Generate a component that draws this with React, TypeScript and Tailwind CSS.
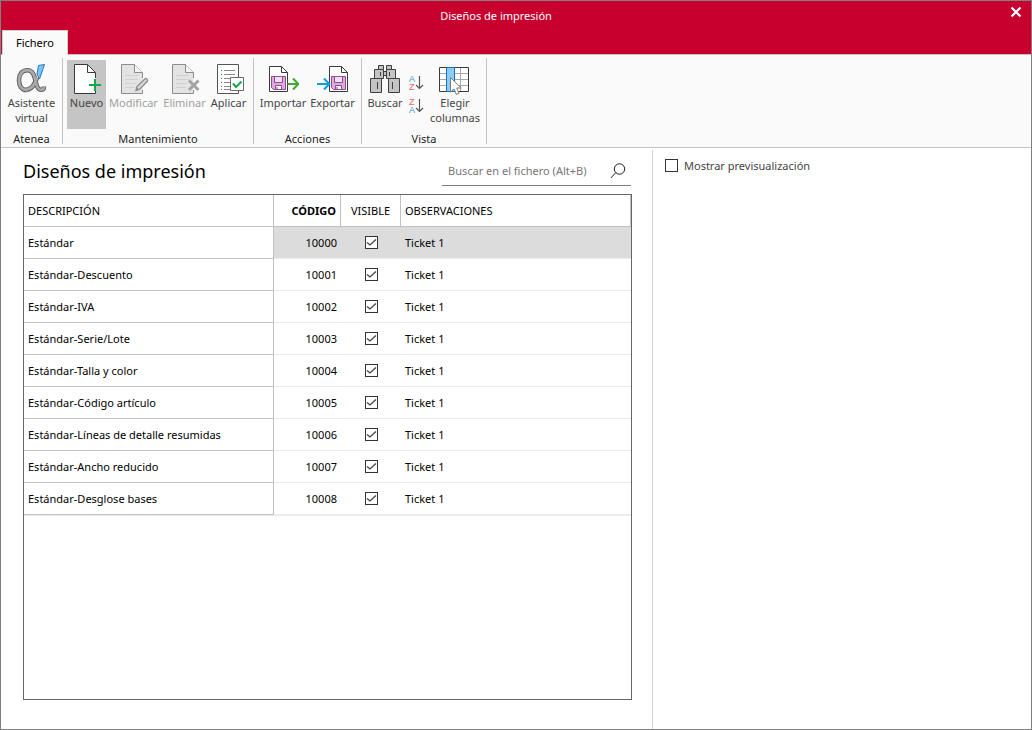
import { useState } from "react";
import type { ReactNode } from "react";

//! Data

const designs = [
  { code: 10000, name: "Estándar", notes: "Ticket 1" },
  { code: 10001, name: "Estándar-Descuento", notes: "Ticket 1" },
  { code: 10002, name: "Estándar-IVA", notes: "Ticket 1" },
  { code: 10003, name: "Estándar-Serie/Lote", notes: "Ticket 1" },
  { code: 10004, name: "Estándar-Talla y color", notes: "Ticket 1" },
  { code: 10005, name: "Estándar-Código artículo", notes: "Ticket 1" },
  { code: 10006, name: "Estándar-Líneas de detalle resumidas", notes: "Ticket 1" },
  { code: 10007, name: "Estándar-Ancho reducido", notes: "Ticket 1" },
  { code: 10008, name: "Estándar-Desglose bases", notes: "Ticket 1" },
];

//! Icons

function Icon({ children }: { children: ReactNode }) {
  return (
    <svg viewBox="0 0 32 32" className="h-8 w-8 shrink-0" fill="none" aria-hidden="true">
      {children}
    </svg>
  );
}

function AlphaIcon() {
  const loop =
    "M21 14.5C19 21 15.5 26.5 10.5 26.5M20 20C21 24 22 26.8 25 26.8C27.2 26.8 28 25.5 28 23.5M20 20C18.5 12.5 17 7.2 11.5 7.2C6 7.2 3 11.5 3 17C3 23 6 27 10.5 27";
  return (
    <Icon>
      <path d={loop} stroke="#5c5c5c" strokeWidth="4.6" />
      <path d={loop} stroke="#a9a9a9" strokeWidth="2.8" />
      <path d="M22.5 2.5L28.5 1.5L23.5 16L21 11Z" fill="#83c3f3" stroke="#1e78c2" />
    </Icon>
  );
}

function NewIcon() {
  return (
    <Icon>
      <path d="M3.5 1.5H16.5L24.5 9.5V30.5H3.5Z" fill="#fff" />
      <path d="M24.5 15V9.5L16.5 1.5H3.5V30.5H24.5V28" stroke="#3a3a3a" />
      <path d="M16.5 1.5V9.5H24.5" stroke="#3a3a3a" />
      <path d="M24 16V28M18 22H30" stroke="#13a84c" strokeWidth="2" />
    </Icon>
  );
}

function DisabledDoc() {
  return (
    <>
      <path d="M3.5 1.5H16.5L24.5 9.5V30.5H3.5Z" fill="#e3e3e3" />
      <path d="M24.5 15V9.5L16.5 1.5H3.5V30.5H24.5V27" stroke="#8c8c8c" />
      <path d="M16.5 1.5V9.5H24.5" fill="#f4f4f4" stroke="#8c8c8c" />
      <path d="M7 12.5H20M7 16.5H20M7 20.5H18M7 24.5H17" stroke="#d0d0d0" />
    </>
  );
}

function EditIcon() {
  return (
    <Icon>
      <DisabledDoc />
      <path
        d="M18 27.5L19 23.5L27 15.8C28.3 14.8 30.4 16.8 29.4 18.3L21.7 26.2Z"
        fill="#d6d6d6"
        stroke="#8c8c8c"
        strokeWidth="1.3"
      />
      <path d="M18 27.5L18.8 24.6L20.9 26.5Z" fill="#8c8c8c" />
    </Icon>
  );
}

function DeleteIcon() {
  return (
    <Icon>
      <DisabledDoc />
      <path d="M20 17.5L29.5 27M29.5 17.5L20 27" stroke="#a3a3a3" strokeWidth="3" />
    </Icon>
  );
}

function ApplyIcon() {
  return (
    <Icon>
      <path d="M4.5 1.5H25.5V30.5H4.5Z" fill="#fff" stroke="#555" />
      <path d="M11 7.5H22M11 11.5H22M11 15.5H18M11 19.5H17M11 23.5H17M11 26.5H22" stroke="#8a8a8a" />
      <path d="M8 7.5H9M8 15.5H9M8 23.5H9" stroke="#13a84c" />
      <path d="M8 11.5H9M8 19.5H9M8 26.5H9" stroke="#d8303a" />
      <path d="M17.5 14.5H30.5V27.5H17.5Z" fill="#fff" stroke="#6b6b6b" />
      <path d="M20 20.5L23 24L28.5 18.5" stroke="#13a84c" strokeWidth="2" />
    </Icon>
  );
}

function DiskDoc() {
  return (
    <>
      <path d="M2.5 3.5H14.5L20.5 9.5V28.5H2.5Z" fill="#fff" stroke="#3a3a3a" />
      <path d="M14.5 3.5V9.5H20.5" stroke="#3a3a3a" />
      <path d="M4.5 13.5H18.5V26.5H6.5L4.5 24.5Z" fill="#d9acd9" stroke="#93499a" />
      <path d="M7.5 13.5H15.5V19.5H7.5Z" fill="#f0e1f0" stroke="#93499a" />
      <path d="M8.5 22.5H14.5V26.5H8.5Z" fill="#fff" stroke="#93499a" />
      <path d="M10 24V26" stroke="#93499a" />
    </>
  );
}

function ImportIcon() {
  return (
    <Icon>
      <DiskDoc />
      <path d="M20.5 21H31M26 15.5L31.3 21L26 26.5" stroke="#43a82b" strokeWidth="2" />
    </Icon>
  );
}

function ExportIcon() {
  return (
    <Icon>
      <g transform="translate(10 0)">
        <DiskDoc />
      </g>
      <path d="M0 21H12M7 15.5L12.3 21L7 26.5" stroke="#0a9de0" strokeWidth="2" />
    </Icon>
  );
}

function BinocularsIcon() {
  return (
    <Icon>
      <g fill="#c4c4c4" stroke="#3f3f3f">
        <path d="M9.5 2.5H14.5V6.5H9.5ZM17.5 2.5H22.5V6.5H17.5Z" />
        <path d="M14.5 8.5H17.5V12.5H14.5Z" />
        <path d="M5.5 6.5H14.5V15.5H5.5ZM17.5 6.5H26.5V15.5H17.5Z" />
        <path d="M1.5 15.5H12.5V29.5H1.5ZM19.5 15.5H30.5V29.5H19.5Z" />
        <path d="M11.5 9V13M20.5 9V13M8.5 19V26M23.5 19V26" />
      </g>
    </Icon>
  );
}

function ColumnsIcon() {
  return (
    <Icon>
      <path d="M0.5 4.5H29.5V28.5H0.5Z" fill="#fff" />
      <path d="M1 10.5H29M1 16.5H29M1 22.5H29M21.5 5V28" stroke="#a8a8a8" />
      <path d="M0.5 4.5H29.5V28.5H0.5Z" stroke="#3a3a3a" />
      <path d="M7.5 4.5H15.5V28.5H7.5Z" fill="#8fccf5" stroke="#1272c0" />
      <path
        d="M11.5 14.5V29L15 26L17.5 31.5L20 30.3L17.7 25H22.2Z"
        fill="#fff"
        stroke="#7d7d7d"
      />
    </Icon>
  );
}

function SortIcon({ top, bottom }: { top: string; bottom: string }) {
  return (
    <svg viewBox="0 0 16 17" className="h-[17px] w-4" aria-hidden="true">
      <g fontFamily="Liberation Sans, sans-serif" fontSize="9">
        <text x="1" y="8" fill={top === "A" ? "#3b9bd9" : "#e8626c"}>
          {top}
        </text>
        <text x="1" y="16" fill={bottom === "A" ? "#3b9bd9" : "#e8626c"}>
          {bottom}
        </text>
      </g>
      <path d="M11.5 2V14.5M8 11L11.5 14.5L15 11" fill="none" stroke="#555" strokeWidth="1.2" />
    </svg>
  );
}

//! Ribbon

function RibbonGroup({ title, children }: { title: string; children: ReactNode }) {
  return (
    <div className="flex flex-col justify-between border-r border-[#c3c3c3] px-1 pt-[2px]">
      <div className="flex">{children}</div>
      <p className="text-center leading-[11px] text-[#1c1c1c]">{title}</p>
    </div>
  );
}

type RibbonButtonProps = {
  icon: ReactNode;
  label: string;
  width: string;
  active?: boolean;
  disabled?: boolean;
};

function RibbonButton({ icon, label, width, active, disabled }: RibbonButtonProps) {
  return (
    <button
      type="button"
      disabled={disabled}
      className={`flex h-[69px] flex-col items-center pt-[3px] ${width} ${
        active ? "bg-[#c5c5c5]" : ""
      } ${disabled ? "text-[#a0a0a0]" : "text-[#444]"}`}
    >
      {icon}
      <span>{label}</span>
    </button>
  );
}

function Checkbox({ checked, onChange, label }: { checked: boolean; onChange: () => void; label: string }) {
  return (
    <span className="relative inline-block h-[13px] w-[13px] align-middle">
      <input
        type="checkbox"
        checked={checked}
        onChange={onChange}
        aria-label={label}
        className="block h-[13px] w-[13px] appearance-none border border-[#333] bg-white"
      />
      {checked && (
        <svg viewBox="0 0 13 13" className="pointer-events-none absolute inset-0" fill="none">
          <path d="M2 6.5L5 9L11 3.5" stroke="#444" strokeWidth="1.3" />
        </svg>
      )}
    </span>
  );
}

function DesignTable() {
  const [hidden, setHidden] = useState<number[]>([]);
  const [selected, setSelected] = useState(10000);

  const toggle = (code: number) =>
    setHidden(hidden.includes(code) ? hidden.filter((c) => c !== code) : [...hidden, code]);

  return (
    <table className="w-full table-fixed border-separate border-spacing-0 border-b border-[#ececec] text-black">
      <thead>
        <tr className="h-8 text-left [&>th]:border-r [&>th]:border-b [&>th]:border-[#c0c0c0] [&>th]:p-0">
          <th className="w-[250px] font-normal">
            <span className="pl-1">DESCRIPCIÓN</span>
          </th>
          <th className="w-[67px] text-right font-bold">
            <span className="pr-1">CÓDIGO</span>
          </th>
          <th className="w-[60px] text-center font-normal">VISIBLE</th>
          <th className="font-normal">
            <span className="pl-1">OBSERVACIONES</span>
          </th>
        </tr>
      </thead>
      <tbody>
        {designs.map((design) => (
          <tr
            key={design.code}
            onClick={() => setSelected(design.code)}
            className={`h-8 [&>td]:border-b [&>td]:border-[#ececec] [&>td]:p-0 ${
              selected === design.code ? "bg-[#dcdcdc]" : ""
            }`}
          >
            <td className="border-r border-r-[#c0c0c0]! border-b-[#c0c0c0]! bg-white">
              <span className="pl-1">{design.name}</span>
            </td>
            <td className="text-right">
              <span className="pr-1">{design.code}</span>
            </td>
            <td className="text-center leading-none">
              <Checkbox
                checked={!hidden.includes(design.code)}
                onChange={() => toggle(design.code)}
                label={`Visible ${design.code}`}
              />
            </td>
            <td>
              <span className="pl-1">{design.notes}</span>
            </td>
          </tr>
        ))}
      </tbody>
    </table>
  );
}

function App() {
  const [preview, setPreview] = useState(false);

  return (
    <div className="flex min-h-screen flex-col border border-[#808080] bg-white font-['Noto_Sans',sans-serif] text-[11px] leading-[15px]">
      {/* Title bar */}
      <header className="flex flex-col bg-[#c8002d]">
        <div className="flex h-[29px] items-center text-white">
          <h1 className="flex-1 pl-2 text-center">Diseños de impresión</h1>
          <button type="button" aria-label="Cerrar" className="mb-[7px] flex w-12 justify-end pr-[9px]">
            <svg viewBox="0 0 12 12" className="h-3 w-3" stroke="#fff" strokeWidth="2.2">
              <path d="M1.5 1.5L10.5 10.5M10.5 1.5L1.5 10.5" />
            </svg>
          </button>
        </div>
        <nav className="flex pl-px">
          <a
            href="#"
            className="relative -mb-px border-x border-t border-[#d0d0d0] bg-[#fafafa] px-[13px] pt-1 pb-[5px] text-black"
          >
            Fichero
          </a>
        </nav>
      </header>

      {/* Ribbon */}
      <div className="flex border-y border-[#c3c3c3] bg-[#fafafa] py-[3px]">
        <div className="flex h-[86px]">
          <RibbonGroup title="Atenea">
            <RibbonButton icon={<AlphaIcon />} label="Asistente virtual" width="w-[53px]" />
          </RibbonGroup>
          <RibbonGroup title="Mantenimiento">
            <RibbonButton icon={<NewIcon />} label="Nuevo" width="w-[39px]" active />
            <RibbonButton icon={<EditIcon />} label="Modificar" width="w-[55px]" disabled />
            <RibbonButton icon={<DeleteIcon />} label="Eliminar" width="w-[47px]" disabled />
            <RibbonButton icon={<ApplyIcon />} label="Aplicar" width="w-[41px]" />
          </RibbonGroup>
          <RibbonGroup title="Acciones">
            <RibbonButton icon={<ImportIcon />} label="Importar" width="w-[50px]" />
            <RibbonButton icon={<ExportIcon />} label="Exportar" width="w-[49px]" />
          </RibbonGroup>
          <RibbonGroup title="Vista">
            <RibbonButton icon={<BinocularsIcon />} label="Buscar" width="w-[38px]" />
            <div className="flex w-6 flex-col items-center gap-[6px] pt-[14px]">
              <button type="button" aria-label="Orden ascendente">
                <SortIcon top="A" bottom="Z" />
              </button>
              <button type="button" aria-label="Orden descendente">
                <SortIcon top="Z" bottom="A" />
              </button>
            </div>
            <RibbonButton icon={<ColumnsIcon />} label="Elegir columnas" width="w-[54px]" />
          </RibbonGroup>
        </div>
      </div>

      <div className="flex flex-1 pt-[2px]">
        {/* Design list */}
        <main className="flex flex-1 flex-col border-r border-[#d5d5d5] pt-2 pr-5 pb-[29px] pl-[22px]">
          <div className="mb-2 flex items-end justify-between pr-px">
            <h2 className="pb-[3px] text-[18px] leading-6 text-black">Diseños de impresión</h2>
            <label className="flex h-7 w-[189px] items-center border-b border-[#808080] pr-[5px] pb-[2px] pl-[6px]">
              <input
                type="text"
                aria-label="Buscar en el fichero"
                placeholder="Buscar en el fichero (Alt+B)"
                className="min-w-0 flex-1 outline-none placeholder:text-[#767676]"
              />
              <svg viewBox="0 0 16 16" className="h-4 w-4 shrink-0" fill="none" stroke="#222" aria-hidden="true">
                <circle cx="9.5" cy="6" r="5.2" />
                <path d="M5.8 9.7L0.8 15" />
              </svg>
            </label>
          </div>
          <div className="flex-1 border border-[#666]">
            <DesignTable />
          </div>
        </main>

        {/* Preview */}
        <aside className="w-[378px] pt-2 pl-3">
          <label className="flex items-center gap-[6px] text-[#444]">
            <Checkbox
              checked={preview}
              onChange={() => setPreview(!preview)}
              label="Mostrar previsualización"
            />
            Mostrar previsualización
          </label>
        </aside>
      </div>
    </div>
  );
}

export default App;
